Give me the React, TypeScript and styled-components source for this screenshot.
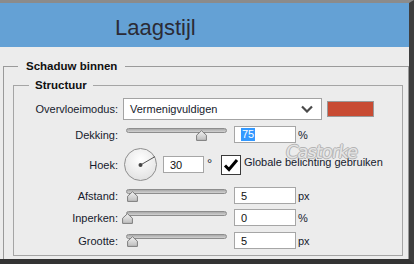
import React from "react";
import styled, { createGlobalStyle } from "styled-components";

const Global = createGlobalStyle`
  html, body {
    margin: 0;
    padding: 0;
    background: #ececec;
  }
  body {
    font-family: "Liberation Sans", Arial, sans-serif;
  }
`;

const Window = styled.div`
  width: 414px;
  height: 264px;
  box-sizing: border-box;
  border-top: 3px solid #8b8b8b;
  border-right: 5px solid #3e3e3e;
  border-bottom: 5px solid #333333;
  display: flex;
  flex-direction: column;
  overflow: hidden;
  position: relative;
`;

const Header = styled.div`
  height: 44px;
  flex: none;
  box-sizing: border-box;
  background: #64a1d5;
  padding: 5px 0 0 115px;
  line-height: 39px;
  font-size: 22px;
  color: #2b2b36;
`;

const Body = styled.div`
  flex: 1;
  background: #ececec;
  padding: 12px 0 0 3px;
  overflow: hidden;
`;

const Group = styled.fieldset<{ $inner?: boolean }>`
  margin: ${(p) => (p.$inner ? "5px 5px 0 9px" : "0")};
  padding: ${(p) => (p.$inner ? "6px 0 6px 0" : "0 0 20px 0")};
  border: 1px solid ${(p) => (p.$inner ? "#a5a5a5" : "#9a9a9a")};
  min-width: 0;
`;

const Legend = styled.legend<{ $inner?: boolean }>`
  margin-left: ${(p) => (p.$inner ? "15px" : "14px")};
  padding: ${(p) => (p.$inner ? "0 6px" : "0 8px")};
  font-size: 11.5px;
  font-weight: bold;
  line-height: 14px;
  color: #101010;
`;

const Rows = styled.div`
  display: flex;
  flex-direction: column;
`;

const Row = styled.div<{ $mt?: number }>`
  display: flex;
  align-items: center;
  margin-top: ${(p) => p.$mt ?? 0}px;
  font-size: 11px;
  color: #161a2c;
`;

const Label = styled.div`
  width: 104px;
  text-align: right;
  flex: none;
`;

const Select = styled.div`
  margin-left: 5px;
  width: 199px;
  height: 22px;
  box-sizing: border-box;
  background: #fff;
  border: 1px solid #a3a3a3;
  display: flex;
  align-items: center;
  justify-content: space-between;
  padding: 0 8px 0 6px;
`;

const Swatch = styled.div`
  margin-left: 5px;
  width: 47px;
  height: 16px;
  box-sizing: border-box;
  background: #c84b33;
  border: 1px solid #9a9a9a;
`;

const Slider = styled.div`
  position: relative;
  margin-left: 8px;
  width: 101px;
  height: 17px;
  flex: none;
`;

const Track = styled.div`
  position: absolute;
  left: 0;
  right: 0;
  top: 2px;
  height: 5px;
  box-sizing: border-box;
  border-radius: 3px;
  border: 1px solid #8d8d8d;
  background: linear-gradient(#a9a9a9, #d2d2d2);
`;

const Thumb = styled.svg`
  position: absolute;
  top: 4px;
  width: 11px;
  height: 11px;
  margin-left: -5px;
`;

const Field = styled.div<{ $w: number; $ml: number }>`
  margin-left: ${(p) => p.$ml}px;
  width: ${(p) => p.$w}px;
  height: 17px;
  box-sizing: border-box;
  background: #fff;
  border: 1px solid #a6a6a6;
  padding-left: 6px;
  display: flex;
  align-items: center;
  color: #111;
`;

const Selected = styled.span`
  background: #3399ff;
  color: #fff;
  padding: 0 1px;
  line-height: 13px;
`;

const Unit = styled.span`
  margin-left: 2px;
`;

const Dial = styled.div`
  position: relative;
  margin-left: 6px;
  width: 33px;
  height: 33px;
  box-sizing: border-box;
  border-radius: 50%;
  border: 1px solid #8e8e8e;
  background: radial-gradient(circle at 50% 35%, #ffffff, #e6e6e6 70%, #d6d6d6);
`;

const Degree = styled.span`
  margin-left: 3px;
  width: 10px;
  font-size: 13px;
  margin-top: -3px;
`;

const Check = styled.div`
  margin-left: 4px;
  width: 20px;
  height: 20px;
  box-sizing: border-box;
  border: 1px solid #3a3a3a;
  background: #fff;
  display: flex;
  align-items: center;
  justify-content: center;
`;

const CheckText = styled.span`
  margin-left: 3px;
  margin-top: -5px;
`;

const Watermark = styled.div`
  position: absolute;
  left: 286px;
  top: 138px;
  font-size: 18px;
  font-family: "DejaVu Sans", sans-serif;
  color: #e4e4e4;
  transform: skewX(-8deg);
  text-shadow: 1px 0 0 #b4b4b4, -1px 0 0 #b4b4b4, 0 1px 0 #b4b4b4, 0 -1px 0 #b4b4b4;
  letter-spacing: -1px;
`;

function Range({ pos }: { pos: number }) {
  return (
    <Slider>
      <Track />
      <Thumb viewBox="0 0 11 11" style={{ left: pos }}>
        <defs>
          <linearGradient id="tg" x1="0" y1="0" x2="0" y2="1">
            <stop offset="0" stopColor="#f2f2f2" />
            <stop offset="1" stopColor="#bdbdbd" />
          </linearGradient>
        </defs>
        <path d="M5.5 0.7 L10.4 5.2 L10.4 10.4 L0.6 10.4 L0.6 5.2 Z" fill="url(#tg)" stroke="#7d7d7d" strokeWidth="1" />
      </Thumb>
    </Slider>
  );
}

export default function App() {
  return (
    <>
      <Global />
      <Window>
        <Header>Laagstijl</Header>
        <Body>
          <Group>
            <Legend>Schaduw binnen</Legend>
            <Group $inner>
              <Legend $inner>Structuur</Legend>
              <Rows>
                <Row>
                  <Label>Overvloeimodus:</Label>
                  <Select>
                    <span>Vermenigvuldigen</span>
                    <svg width="12" height="8" viewBox="0 0 12 8">
                      <path d="M1 1.5 L6 6.5 L11 1.5" fill="none" stroke="#4a4a4a" strokeWidth="2.2" />
                    </svg>
                  </Select>
                  <Swatch />
                </Row>
                <Row $mt={6}>
                  <Label>Dekking:</Label>
                  <Range pos={75} />
                  <Field $w={62} $ml={7}>
                    <Selected>75</Selected>
                  </Field>
                  <Unit>%</Unit>
                </Row>
                <Row $mt={5}>
                  <Label>Hoek:</Label>
                  <Dial>
                    <svg width="31" height="31" viewBox="0 0 31 31" style={{ display: "block" }}>
                      <line x1="15.5" y1="16" x2="30" y2="7.6" stroke="#555" strokeWidth="1" />
                      <circle cx="15.5" cy="16" r="2" fill="#444" />
                    </svg>
                  </Dial>
                  <Field $w={41} $ml={6}>30</Field>
                  <Degree>°</Degree>
                  <Check>
                    <svg width="16" height="16" viewBox="0 0 16 16">
                      <path d="M2 8.5 L6 12.5 L14 3" fill="none" stroke="#000" strokeWidth="3" />
                    </svg>
                  </Check>
                  <CheckText>Globale belichting gebruiken</CheckText>
                </Row>
                <Row $mt={6}>
                  <Label>Afstand:</Label>
                  <Range pos={6} />
                  <Field $w={62} $ml={7}>5</Field>
                  <Unit>px</Unit>
                </Row>
                <Row $mt={5}>
                  <Label>Inperken:</Label>
                  <Range pos={1} />
                  <Field $w={62} $ml={7}>0</Field>
                  <Unit>%</Unit>
                </Row>
                <Row $mt={6}>
                  <Label>Grootte:</Label>
                  <Range pos={6} />
                  <Field $w={62} $ml={7}>5</Field>
                  <Unit>px</Unit>
                </Row>
              </Rows>
            </Group>
          </Group>
        </Body>
        <Watermark>Castorke</Watermark>
      </Window>
    </>
  );
}
